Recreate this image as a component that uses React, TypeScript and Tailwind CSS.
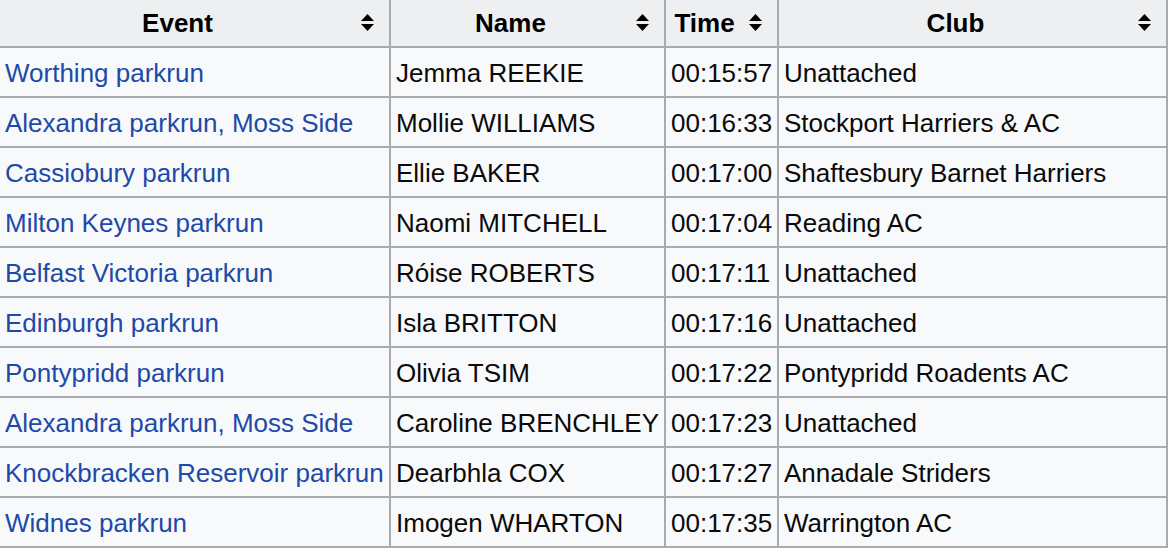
import React from "react";

const rows: [string, string, string, string][] = [
  ["Worthing parkrun", "Jemma REEKIE", "00:15:57", "Unattached"],
  ["Alexandra parkrun, Moss Side", "Mollie WILLIAMS", "00:16:33", "Stockport Harriers & AC"],
  ["Cassiobury parkrun", "Ellie BAKER", "00:17:00", "Shaftesbury Barnet Harriers"],
  ["Milton Keynes parkrun", "Naomi MITCHELL", "00:17:04", "Reading AC"],
  ["Belfast Victoria parkrun", "Róise ROBERTS", "00:17:11", "Unattached"],
  ["Edinburgh parkrun", "Isla BRITTON", "00:17:16", "Unattached"],
  ["Pontypridd parkrun", "Olivia TSIM", "00:17:22", "Pontypridd Roadents AC"],
  ["Alexandra parkrun, Moss Side", "Caroline BRENCHLEY", "00:17:23", "Unattached"],
  ["Knockbracken Reservoir parkrun", "Dearbhla COX", "00:17:27", "Annadale Striders"],
  ["Widnes parkrun", "Imogen WHARTON", "00:17:35", "Warrington AC"],
];

function SortIcon() {
  return (
    <svg width="13" height="17" viewBox="0 0 13 17" className="block shrink-0">
      <path d="M6.5 0 L13 7 H0 Z" fill="#000" />
      <path d="M0 10 H13 L6.5 17 Z" fill="#000" />
    </svg>
  );
}

function Head({ label }: { label: string }) {
  return (
    <div className="relative flex h-[46px] items-center bg-[#eeeff1] pl-[6px] pr-[40px]">
      <span className="flex-1 text-center font-bold">{label}</span>
      <span className="absolute right-[15px] top-[14px] flex">
        <SortIcon />
      </span>
    </div>
  );
}

function Cell({ children, link }: { children: React.ReactNode; link?: boolean }) {
  return (
    <div
      className={
        "flex h-[48px] items-center whitespace-nowrap bg-[#f8f9fa] pl-[5px] pr-[6px] pt-[2px] " +
        (link ? "text-[#1d4aa9]" : "text-[#0a0a0a]")
      }
    >
      {children}
    </div>
  );
}

export default function App() {
  return (
    <div className="min-h-[556px] w-[1170px] overflow-hidden bg-white">
      <div
        className="grid w-[1168px] grid-cols-[389px_273px_111px_387px] gap-[2px] bg-[#a9abae] pb-[2px] pr-[2px] text-[26px] leading-[30px] text-black"
        style={{ fontFamily: '"Liberation Sans", Arial, Helvetica, sans-serif' }}
      >
        <Head label="Event" />
        <Head label="Name" />
        <Head label="Time" />
        <Head label="Club" />
        {rows.map((r, i) => (
          <React.Fragment key={i}>
            <Cell link>{r[0]}</Cell>
            <Cell>{r[1]}</Cell>
            <Cell>{r[2]}</Cell>
            <Cell>{r[3]}</Cell>
          </React.Fragment>
        ))}
      </div>
    </div>
  );
}
